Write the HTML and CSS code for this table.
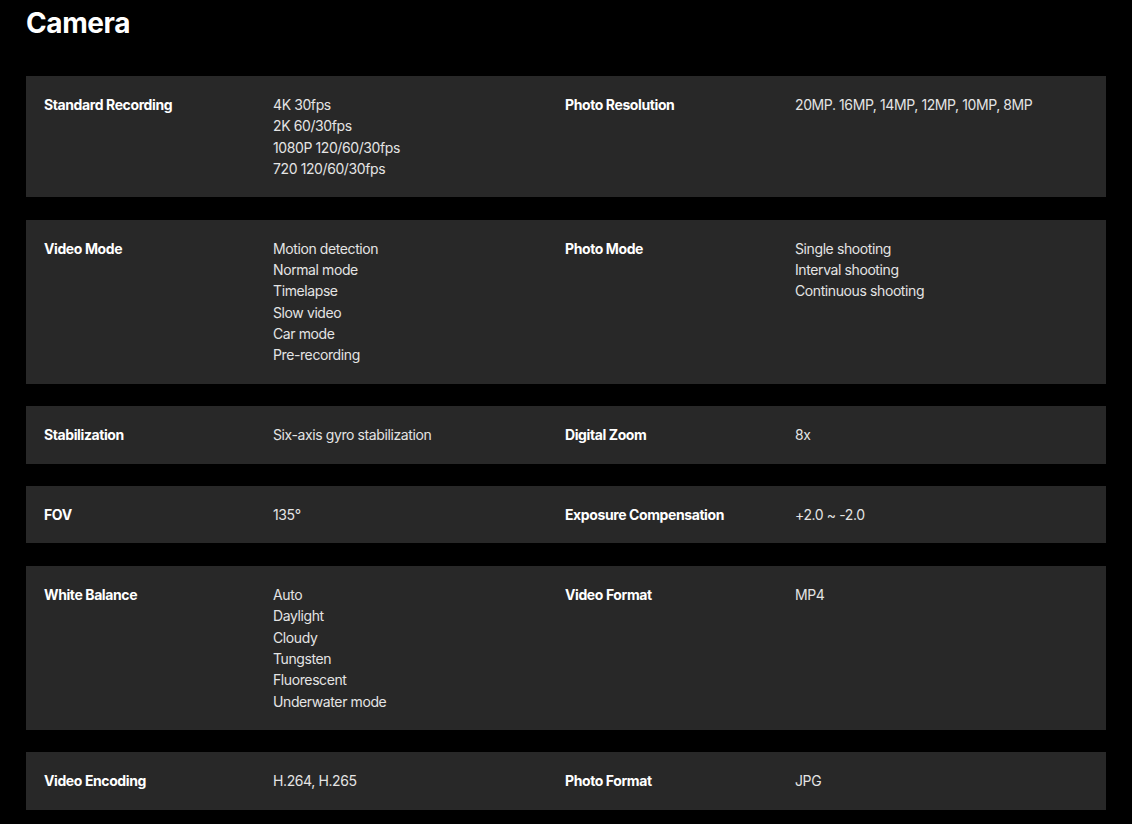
FILE: index.html
```html
<!DOCTYPE html>
<html lang="en">
<head>
<meta charset="utf-8">
<title>Camera</title>
<link rel="stylesheet" href="styles.css">
</head>
<body>
<main class="page">
  <h1 class="title">Camera</h1>
  <div class="specs">
    <div class="row">
      <div class="label">Standard Recording</div>
      <div class="value"><div>4K 30fps</div><div>2K 60/30fps</div><div>1080P 120/60/30fps</div><div>720 120/60/30fps</div></div>
      <div class="label">Photo Resolution</div>
      <div class="value"><div>20MP. 16MP, 14MP, 12MP, 10MP, 8MP</div></div>
    </div>
    <div class="row">
      <div class="label">Video Mode</div>
      <div class="value"><div>Motion detection</div><div>Normal mode</div><div>Timelapse</div><div>Slow video</div><div>Car mode</div><div>Pre-recording</div></div>
      <div class="label">Photo Mode</div>
      <div class="value"><div>Single shooting</div><div>Interval shooting</div><div>Continuous shooting</div></div>
    </div>
    <div class="row">
      <div class="label">Stabilization</div>
      <div class="value"><div>Six-axis gyro stabilization</div></div>
      <div class="label">Digital Zoom</div>
      <div class="value"><div>8x</div></div>
    </div>
    <div class="row">
      <div class="label">FOV</div>
      <div class="value"><div>135°</div></div>
      <div class="label">Exposure Compensation</div>
      <div class="value"><div>+2.0 ~ -2.0</div></div>
    </div>
    <div class="row">
      <div class="label">White Balance</div>
      <div class="value"><div>Auto</div><div>Daylight</div><div>Cloudy</div><div>Tungsten</div><div>Fluorescent</div><div>Underwater mode</div></div>
      <div class="label">Video Format</div>
      <div class="value"><div>MP4</div></div>
    </div>
    <div class="row">
      <div class="label">Video Encoding</div>
      <div class="value"><div>H.264, H.265</div></div>
      <div class="label">Photo Format</div>
      <div class="value"><div>JPG</div></div>
    </div>
  </div>
</main>
</body>
</html>
```

FILE: styles.css
```css
html, body {
  margin: 0;
  padding: 0;
  background: #000;
}
body {
  font-family: Inter, "Noto Sans", sans-serif;
  color: #fff;
}
.page {
  padding: 0 26px;
}
.title {
  margin: 0;
  padding-top: 6px;
  height: 76px;
  box-sizing: border-box;
  font-size: 28px;
  font-weight: 700;
  line-height: 34px;
  letter-spacing: -0.4px;
}
.specs {
  display: flex;
  flex-direction: column;
  gap: 22.5px;
}
.row {
  background: #282828;
  padding: 18px;
  display: grid;
  grid-template-columns: 229px 292px 230px 1fr;
  font-size: 14px;
  line-height: 21.33px;
  letter-spacing: -0.4px;
}
.label {
  font-weight: 650;
  color: #fff;
}
.value {
  color: #e4e4e4;
  font-weight: 400;
}
```
